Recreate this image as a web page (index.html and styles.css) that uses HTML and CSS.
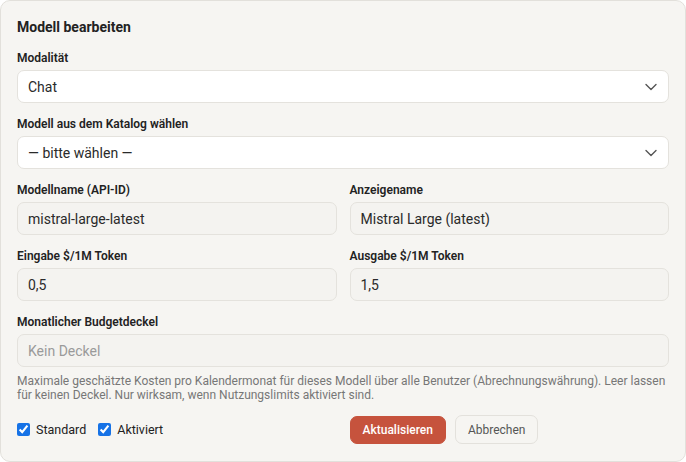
FILE: index.html
```html
<!DOCTYPE html>
<html lang="de">
<head>
  <meta charset="UTF-8" />
  <title>Modell bearbeiten</title>
  <link rel="stylesheet" href="styles.css">
</head>
<body>

  <!-- DIALOG MODELL BEARBEITEN -->
  <form class="card">
    <h2 class="title">Modell bearbeiten</h2>

    <div class="field">
      <label class="label">Modalität</label>
      <div class="select-wrap">
        <select class="select">
          <option>Chat</option>
        </select>
        <svg class="chevron" width="12" height="8" viewBox="0 0 12 8"><path d="M1 1.5 6 6.5 11 1.5" fill="none" stroke="#555" stroke-width="1.4" stroke-linecap="round" stroke-linejoin="round"/></svg>
      </div>
    </div>

    <div class="field">
      <label class="label">Modell aus dem Katalog wählen</label>
      <div class="select-wrap">
        <select class="select">
          <option>— bitte wählen —</option>
        </select>
        <svg class="chevron" width="12" height="8" viewBox="0 0 12 8"><path d="M1 1.5 6 6.5 11 1.5" fill="none" stroke="#555" stroke-width="1.4" stroke-linecap="round" stroke-linejoin="round"/></svg>
      </div>
    </div>

    <div class="row">
      <div class="field">
        <label class="label">Modellname (API-ID)</label>
        <input class="input" type="text" value="mistral-large-latest" />
      </div>
      <div class="field">
        <label class="label">Anzeigename</label>
        <input class="input" type="text" value="Mistral Large (latest)" />
      </div>
    </div>

    <div class="row">
      <div class="field">
        <label class="label">Eingabe $/1M Token</label>
        <input class="input" type="text" value="0,5" />
      </div>
      <div class="field">
        <label class="label">Ausgabe $/1M Token</label>
        <input class="input" type="text" value="1,5" />
      </div>
    </div>

    <div class="field">
      <label class="label">Monatlicher Budgetdeckel</label>
      <input class="input" type="text" placeholder="Kein Deckel" />
      <p class="hint">Maximale geschätzte Kosten pro Kalendermonat für dieses Modell über alle Benutzer (Abrechnungswährung). Leer lassen für keinen Deckel. Nur wirksam, wenn Nutzungslimits aktiviert sind.</p>
    </div>

    <div class="row footer">
      <div class="checks">
        <label class="check"><input type="checkbox" checked /> Standard</label>
        <label class="check"><input type="checkbox" checked /> Aktiviert</label>
      </div>
      <div class="actions">
        <button type="button" class="btn primary">Aktualisieren</button>
        <button type="button" class="btn">Abbrechen</button>
      </div>
    </div>
  </form>

</body>
</html>
```

FILE: styles.css
```css
body {
  margin: 0;
  background: #fff;
  font-family: Roboto, "Liberation Sans", sans-serif;
  color: #222;
}
.card {
  box-sizing: border-box;
  width: 686px;
  height: 462px;
  background: #f6f5f2;
  border: 1px solid #e2e0db;
  border-radius: 10px;
  padding: 16px 16px 0 16px;
}
.title {
  font-size: 14px;
  font-weight: 700;
  line-height: 20px;
  margin: 0 0 13px 0;
}
.field {
  display: flex;
  flex-direction: column;
  margin-bottom: 13px;
}
.label {
  font-size: 12px;
  font-weight: 600;
  line-height: 16px;
  margin-bottom: 4px;
}
.row {
  display: grid;
  grid-template-columns: 1fr 1fr;
  column-gap: 13px;
}
.select-wrap {
  position: relative;
}
.select, .input {
  box-sizing: border-box;
  width: 100%;
  height: 33px;
  border: 1px solid #e4e2dd;
  border-radius: 7px;
  padding: 0 10px;
  font-family: inherit;
  font-size: 14px;
  color: #2a2a2a;
  outline: none;
}
.select {
  appearance: none;
  background: #fff;
}
.input {
  background: #f4f3f0;
}
.input::placeholder {
  color: #9a9a9a;
}
.chevron {
  position: absolute;
  right: 12px;
  top: 13px;
}
.hint {
  font-size: 12px;
  line-height: 14px;
  color: #777;
  margin: 7px 0 0 0;
}
.footer {
  align-items: center;
}
.checks {
  display: flex;
  gap: 12px;
}
.check {
  display: flex;
  align-items: center;
  gap: 6px;
  font-size: 12.5px;
}
.check input {
  margin: 0;
  width: 13px;
  height: 13px;
  accent-color: #1672e6;
}
.actions {
  display: flex;
  gap: 9px;
  align-items: center;
}
.btn {
  height: 29px;
  padding: 0 12px;
  border: 1px solid #e3e1dc;
  border-radius: 7px;
  background: #f6f5f2;
  color: #555;
  font-family: inherit;
  font-size: 12px;
}
.btn.primary {
  height: 28px;
  background: #c6533d;
  border-color: #c6533d;
  color: #fff;
  font-weight: 500;
}
```
